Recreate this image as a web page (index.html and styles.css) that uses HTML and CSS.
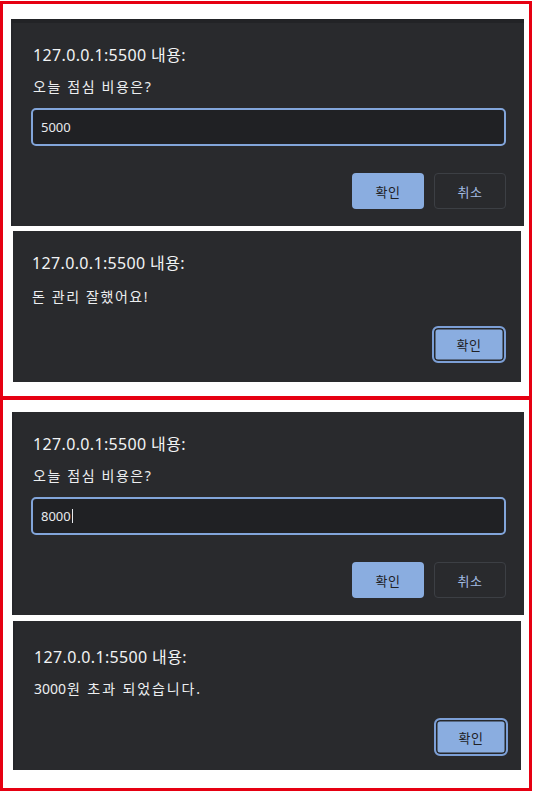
FILE: index.html
```html
<!DOCTYPE html>
<html lang="ko">
<head>
<meta charset="utf-8">
<title>prompt / alert</title>
<link rel="stylesheet" href="styles.css">
</head>
<body>
<div class="frame">
  <section class="panel panel-top">
    <div class="dialog d1">
      <div class="title">127.0.0.1:5500 내용:</div>
      <div class="msg">오늘 점심 비용은?</div>
      <div class="input">5000</div>
      <div class="actions">
        <div class="btn primary">확인</div>
        <div class="btn ghost">취소</div>
      </div>
    </div>
    <div class="dialog d2">
      <div class="title">127.0.0.1:5500 내용:</div>
      <div class="msg">돈 관리 잘했어요!</div>
      <div class="actions">
        <div class="btn primary focus">확인</div>
      </div>
    </div>
  </section>
  <section class="panel panel-bottom">
    <div class="dialog d3">
      <div class="title">127.0.0.1:5500 내용:</div>
      <div class="msg">오늘 점심 비용은?</div>
      <div class="input">8000<span class="caret"></span></div>
      <div class="actions">
        <div class="btn primary">확인</div>
        <div class="btn ghost">취소</div>
      </div>
    </div>
    <div class="dialog d4">
      <div class="title">127.0.0.1:5500 내용:</div>
      <div class="msg"><span class="num">3000</span>원 초과 되었습니다.</div>
      <div class="actions">
        <div class="btn primary focus">확인</div>
      </div>
    </div>
  </section>
</div>
</body>
</html>
```
FILE: styles.css
```css
html, body {
  margin: 0;
  padding: 0;
  background: #ffffff;
}

body {
  font-family: "Noto Sans", "Noto Sans CJK KR", sans-serif;
  color: #e8eaed;
}

.frame {
  margin-top: 1px;
  width: 532px;
  box-sizing: border-box;
  border: 3px solid #e60012;
}

.panel {
  display: flex;
  flex-direction: column;
  background: #ffffff;
}

.panel-top {
  height: 392px;
  box-sizing: border-box;
  padding-top: 15px;
}

.panel-bottom {
  height: 392px;
  box-sizing: border-box;
  padding-top: 12px;
  border-top: 4px solid #e60012;
}

.dialog {
  background: #292a2d;
  display: flex;
  flex-direction: column;
  box-sizing: border-box;
}

.title {
  font-size: 16px;
  line-height: 20px;
  letter-spacing: 0.35px;
  color: #f1f3f4;
  white-space: nowrap;
}

.msg {
  font-size: 14px;
  line-height: 18px;
  letter-spacing: 1.6px;
  color: #eceef0;
  white-space: nowrap;
}

.msg .num {
  letter-spacing: 0;
  margin-right: 1px;
}

.input {
  height: 38px;
  box-sizing: border-box;
  border: 2px solid #82a5da;
  border-radius: 5px;
  background: #202124;
  font-size: 13px;
  line-height: 34px;
  padding-left: 8px;
  color: #e8eaed;
  display: flex;
  align-items: center;
}

.caret {
  display: inline-block;
  width: 1px;
  height: 14px;
  background: #e8eaed;
  margin-left: 1px;
}

.actions {
  display: flex;
  justify-content: flex-end;
  gap: 10px;
}

.btn {
  width: 72px;
  height: 36px;
  box-sizing: border-box;
  border-radius: 4px;
  font-size: 13px;
  letter-spacing: 0.5px;
  display: flex;
  align-items: center;
  justify-content: center;
}

.btn.primary {
  background: #8aade0;
  color: #202124;
}

.btn.ghost {
  border: 1px solid #3c3f44;
  color: #a3bbe2;
}

.btn.primary.focus {
  width: 74px;
  height: 37px;
  border: 2px solid #7c9fd6;
  border-radius: 6px;
  box-shadow: inset 0 0 0 1.5px #26282c;
}

/* dialog 1: prompt with strip of page showing at top and left */
.d1 {
  margin-left: 8px;
  width: 513px;
  height: 207px;
  border-top: 4px solid #222326;
  border-left: 2px solid #25262a;
  padding: 22px 18px 17px 20px;
}

.d1 .msg, .d3 .msg { margin-top: 13px; }
.d1 .input, .d3 .input { margin-top: 12px; margin-left: -2px; }
.d1 .actions, .d3 .actions { margin-top: 27px; }

.d2 {
  margin-top: 5px;
  margin-left: 10px;
  width: 508px;
  height: 151px;
  padding: 22px 15px 19px 19px;
}

.d2 .msg { margin-top: 15px; }
.d2 .actions { margin-top: 20px; }

.d3 {
  margin-left: 9px;
  width: 512px;
  height: 203px;
  border-left: 2px solid #25262a;
  padding: 22px 18px 17px 19px;
}

.d4 {
  margin-top: 6px;
  margin-left: 10px;
  width: 508px;
  height: 149px;
  border-left: 2px solid #25262a;
  padding: 26px 13px 14px 19px;
}

.d4 .msg { margin-top: 13px; letter-spacing: 1.9px; }
.d4 .actions { margin-top: 20px; }
.d4 .btn.primary.focus { height: 38px; }
```
